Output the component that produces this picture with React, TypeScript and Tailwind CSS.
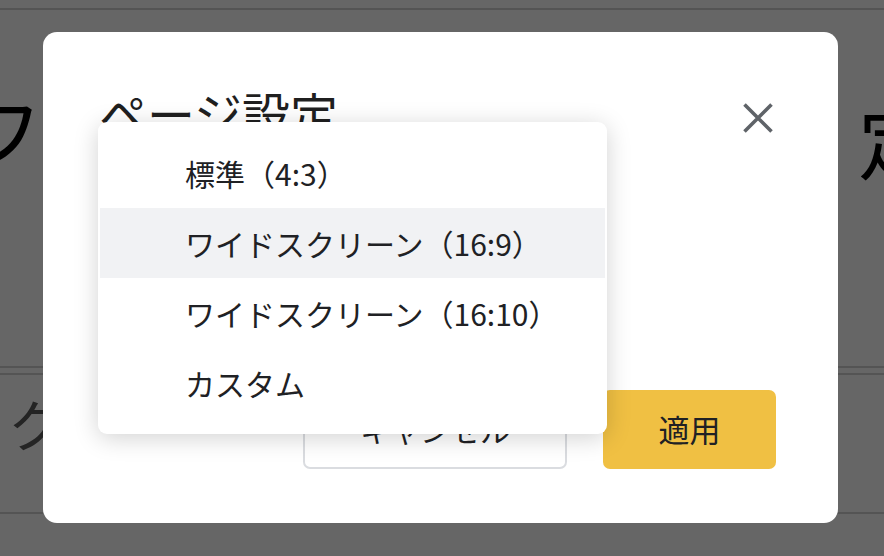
import React from "react";

const font = "font-['Noto_Sans_CJK_JP','Noto_Sans',sans-serif]";

export default function App() {
  const items = ["標準（4:3）", "ワイドスクリーン（16:9）", "ワイドスクリーン（16:10）", "カスタム"];
  return (
    <div className={`relative w-[884px] h-[556px] overflow-hidden bg-white ${font}`}>
      {/* background page */}
      <div className="flex flex-col">
        <div className="h-[8px]" />
        <div className="border-t-[2px] border-[#d2d2d2]" />
        <div className="h-[356px] pt-[78px] flex justify-between items-start">
          <span className="text-[80px] leading-none text-black -ml-[37px]">フ</span>
          <span className="text-[80px] leading-none text-black -mr-[54px] mt-[10px]">定</span>
        </div>
        <div className="border-t-[2px] border-[#d2d2d2]" />
        <div className="h-[5px]" />
        <div className="border-t-[2px] border-[#d2d2d2]" />
        <div className="h-[137px] pt-[20px] pl-[8px]">
          <span className="text-[56px] leading-none text-[#5a5a5a]">ク</span>
        </div>
        <div className="border-t-[2px] border-[#d2d2d2]" />
      </div>

      {/* overlay */}
      <div className="absolute inset-0 bg-black/60" />

      {/* modal */}
      <div className="absolute left-[43px] top-[32px] w-[795px] h-[491px] bg-white rounded-[14px] flex flex-col pl-[60px] pr-[62px] pt-[50px] pb-[54px]">
        <div className="flex items-start justify-between">
          <h2 className="text-[48px] leading-[60px] text-[#1f1f1f] -ml-[4px]">ページ設定</h2>
          <button className="mt-[21px] mr-[3px] w-[30px] h-[30px] flex items-center justify-center">
            <svg width="30" height="30" viewBox="0 0 30 30">
              <path d="M1.5 1.5 L28.5 28.5 M28.5 1.5 L1.5 28.5" stroke="#5f6368" strokeWidth="3.6" />
            </svg>
          </button>
        </div>
        <div className="flex-1" />
        <div className="flex justify-end gap-[36px]">
          <button className="w-[264px] h-[79px] bg-white border-[2px] border-[#dadce0] rounded-[7px] text-[30px] text-[#202124] flex items-center justify-center">
            キャンセル
          </button>
          <button className="w-[173px] h-[79px] bg-[#f0c043] rounded-[7px] text-[31px] text-[#202124] flex items-center justify-center">
            適用
          </button>
        </div>

        {/* dropdown menu */}
        <div className="absolute left-[55px] top-[90px] w-[509px] bg-white rounded-[9px] shadow-[0_4px_24px_rgba(0,0,0,0.18)] py-[16px] px-[2px]">
          {items.map((t, i) => (
            <div
              key={t}
              className={`h-[70px] flex items-center pl-[85px] text-[30px] text-[#202124] ${i === 1 ? "bg-[#f1f2f4]" : ""}`}
            >
              {t}
            </div>
          ))}
        </div>
      </div>
    </div>
  );
}
